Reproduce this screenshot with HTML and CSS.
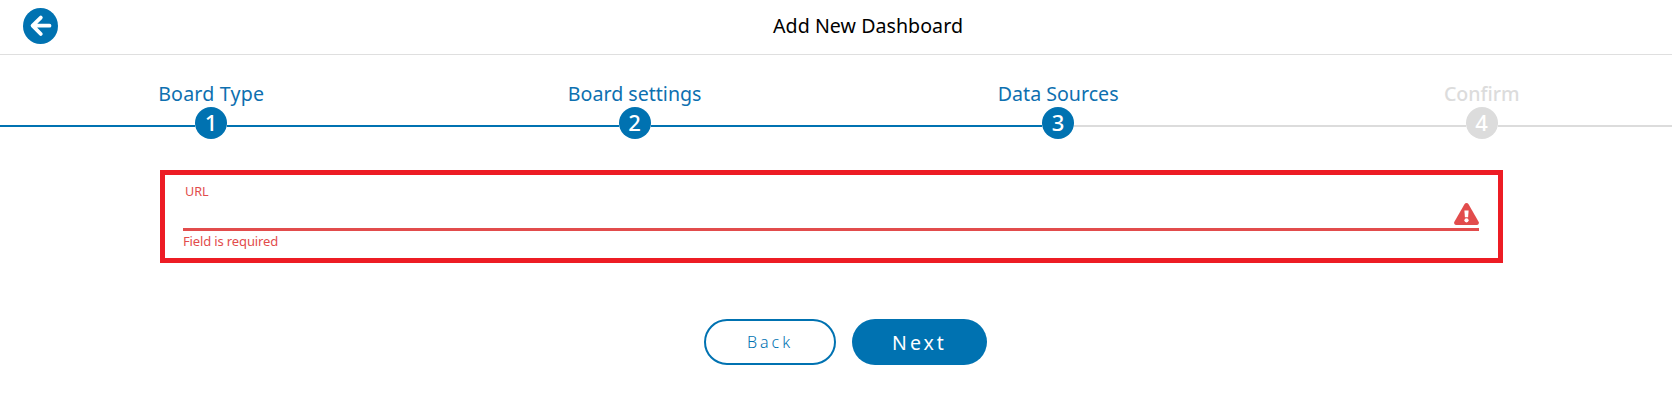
FILE: index.html
```
<!DOCTYPE html>
<html lang="en">
<head>
<meta charset="utf-8">
<title>Add New Dashboard</title>
<link rel="stylesheet" href="styles.css">
</head>
<body>
<header class="topbar">
  <button class="back-arrow" aria-label="Go back">
    <svg viewBox="0 0 35 36" width="35" height="36"><ellipse cx="17.5" cy="18" rx="17.5" ry="18" fill="#0072b1"/><path d="M26.5 17.7H10M17.8 9.6L9.6 17.7l8.2 8.3" fill="none" stroke="#fff" stroke-width="3.8" stroke-linecap="round" stroke-linejoin="round"/></svg>
  </button>
  <h1 class="title">Add New Dashboard</h1>
</header>
<ol class="steps">
  <li class="step"><span class="label label-type">Board Type</span><span class="marker"><span class="number">1</span></span></li>
  <li class="step"><span class="label">Board settings</span><span class="marker"><span class="number">2</span></span></li>
  <li class="step current"><span class="label">Data Sources</span><span class="marker"><span class="number">3</span></span></li>
  <li class="step pending"><span class="label label-confirm">Confirm</span><span class="marker"><span class="number">4</span></span></li>
</ol>
<main class="highlight">
  <label class="field-label">URL</label>
  <div class="field-input">
    <svg class="warning" viewBox="0 0 25 22" width="25" height="22"><path d="M10.6 1.1a2.2 2.2 0 0 1 3.8 0l10.2 17.6a2.2 2.2 0 0 1-1.9 3.3H2.3a2.2 2.2 0 0 1-1.9-3.3z" fill="#e24c4c"/><path d="M10.4 7.4h4.2l-.5 6.8h-3.2z" fill="#fff"/><circle cx="12.5" cy="17.3" r="2.1" fill="#fff"/></svg>
  </div>
  <p class="field-error">Field is required</p>
</main>
<div class="actions">
  <button class="btn btn-back">Back</button>
  <button class="btn btn-next">Next</button>
</div>
</body>
</html>
```
FILE: styles.css
```
* { box-sizing: border-box; }
body {
  margin: 0;
  height: 405px;
  overflow: hidden;
  background: #fff;
  font-family: "Noto Sans", "Open Sans", sans-serif;
}
button { font-family: inherit; margin: 0; border: 0; background: none; }
.topbar {
  display: grid;
  grid-template-columns: 35px 1fr 35px;
  height: 55px;
  padding: 8px 0 0 23px;
  border-bottom: 1px solid #dfdfdf;
}
.back-arrow { padding: 0; width: 35px; height: 36px; }
.back-arrow svg { display: block; }
.title {
  margin: 0;
  padding-left: 41px;
  color: #000;
  font-size: 19.6px;
  font-weight: 400;
  line-height: 36px;
  text-align: center;
  letter-spacing: 0.05px;
}
.steps {
  display: flex;
  width: 1694px;
  margin: 27px 0 0 -0.6px;
  padding: 0;
  list-style: none;
}
.step {
  flex: 1;
  display: flex;
  flex-direction: column;
  align-items: center;
  color: #0d70b0;
}
.label {
  height: 25px;
  line-height: 23px;
  font-size: 19.6px;
  white-space: nowrap;
}
.label-type { letter-spacing: 0.2px; }
.label-confirm { letter-spacing: -0.05px; font-weight: 500; }
.marker {
  display: flex;
  align-items: center;
  align-self: stretch;
  height: 32px;
  color: #fff;
}
.marker::before, .marker::after {
  content: "";
  flex: 1;
  height: 2px;
  margin-top: 6px;
  background: #0072b1;
}
.number {
  width: 32px;
  height: 32px;
  border-radius: 50%;
  background: #0072b1;
  font-size: 22px;
  font-weight: 500;
  line-height: 31px;
  text-align: center;
}
.current .marker::after, .pending .marker::before, .pending .marker::after, .pending .number { background: #dcdcdc; }
.pending { color: #dcdcdc; }
.highlight {
  width: 1343px;
  height: 93px;
  margin: 31px 0 0 160px;
  padding: 8px 19px 0 18px;
  border: 5px solid #ed1c24;
  color: #e24c4c;
}
.field-label {
  display: block;
  height: 18px;
  padding-left: 2px;
  font-size: 12.6px;
  line-height: 18px;
}
.field-input {
  display: flex;
  justify-content: flex-end;
  align-items: flex-end;
  height: 30px;
  padding-bottom: 3px;
  border-bottom: 3px solid #e24c4c;
}
.warning { display: block; height: 22px; }
.field-error { margin: 0; font-size: 13px; line-height: 20px; letter-spacing: -0.14px; }
.actions {
  display: flex;
  gap: 16px;
  margin: 56px 0 0 704px;
}
.btn { height: 46px; border-radius: 23px; text-align: center; }
.btn-back {
  width: 132px;
  border: 2px solid #0072b1;
  color: #0072b1;
  font-size: 16px;
  font-weight: 350;
  letter-spacing: 3px;
}
.btn-next {
  width: 135px;
  background: #0072b1;
  color: #fff;
  font-size: 19.5px;
  letter-spacing: 3px;
}
```
